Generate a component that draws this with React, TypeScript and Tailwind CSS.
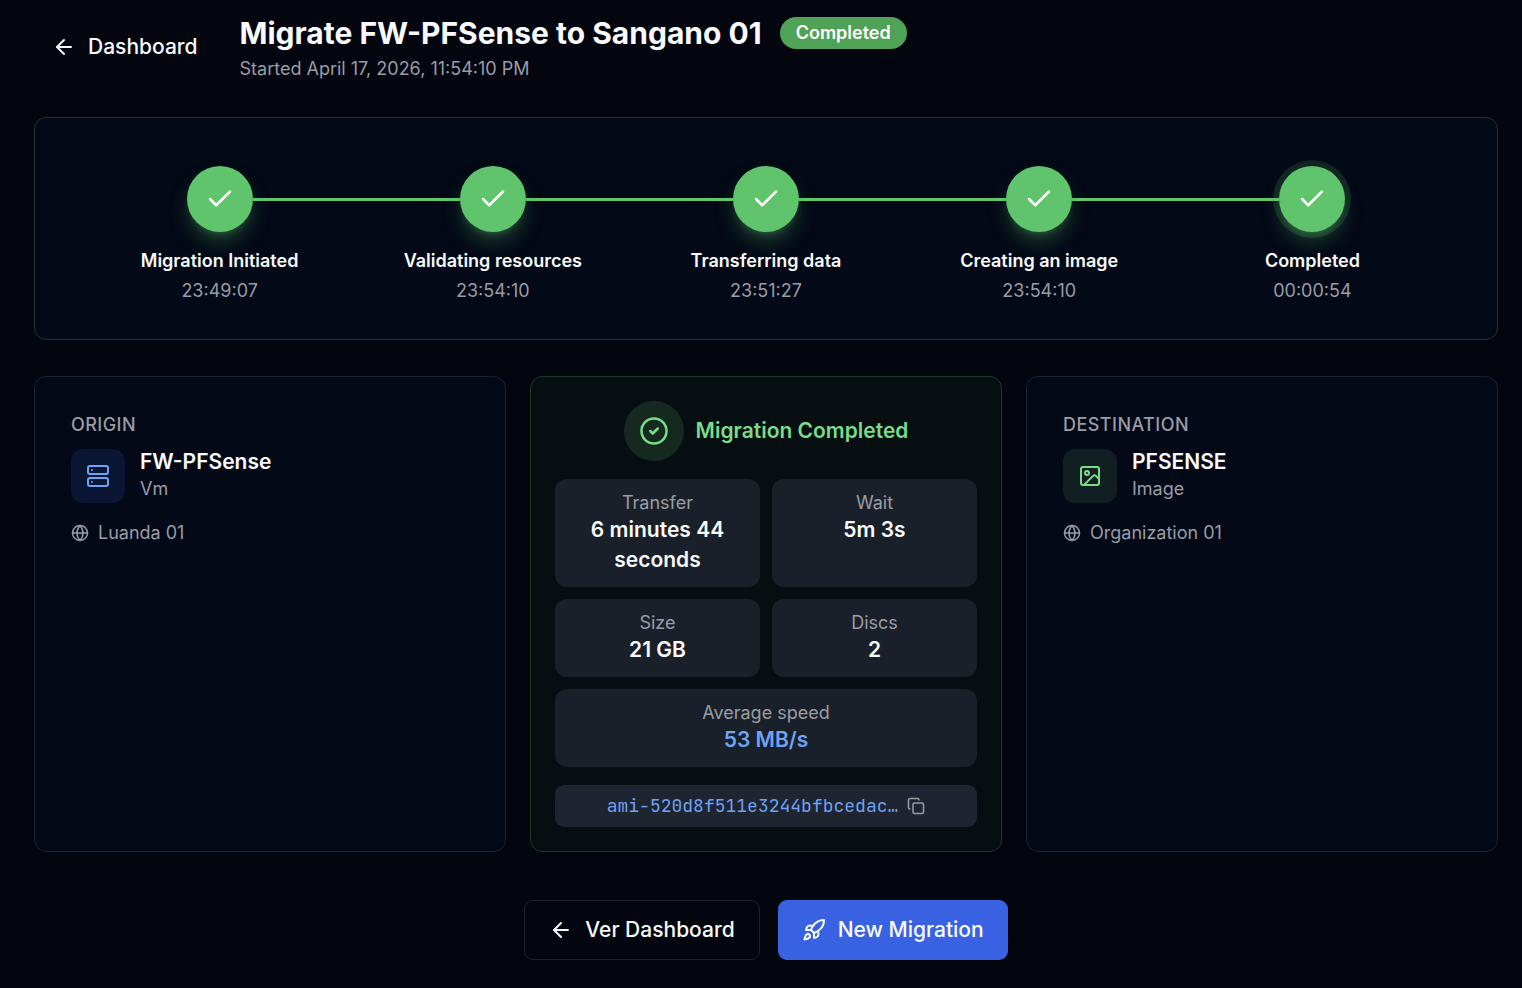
import { useState } from "react";
import type { ReactNode } from "react";
import {
  ArrowLeft,
  Check,
  CircleCheck,
  Copy,
  Globe,
  Image as ImageIcon,
  Rocket,
  Server,
} from "lucide-react";

const steps = [
  { label: "Migration Initiated", time: "23:49:07" },
  { label: "Validating resources", time: "23:54:10" },
  { label: "Transferring data", time: "23:51:27" },
  { label: "Creating an image", time: "23:54:10" },
  { label: "Completed", time: "00:00:54" },
];

const imageId = "ami-520d8f511e3244bfbcedac…";

function Timeline() {
  return (
    <section className="rounded-xl border border-[#1b3829] bg-[#030916] px-12 pt-12 pb-[35px]">
      <ol className="flex">
        {steps.map((step, i) => {
          const first = i === 0;
          const last = i === steps.length - 1;
          return (
            <li key={step.label} className="flex flex-1 flex-col items-center">
              <div className="flex w-full items-center">
                <span className={`relative h-[3px] flex-1 ${first ? "" : "bg-[#60c46c]"}`} />
                <span
                  className={`flex size-[66px] items-center justify-center rounded-full bg-[#60c46c] text-white ${
                    last
                      ? "shadow-[0_0_0_6px_rgba(96,196,108,0.15),0_12px_22px_-3px_rgba(96,196,108,0.3),0_5px_9px_-4px_rgba(96,196,108,0.3)]"
                      : "shadow-[0_12px_22px_-3px_rgba(96,196,108,0.3),0_5px_9px_-4px_rgba(96,196,108,0.3)]"
                  }`}
                >
                  <Check size={30} />
                </span>
                <span className={`relative h-[3px] flex-1 ${last ? "" : "bg-[#60c46c]"}`} />
              </div>
              <p className="mt-[15px] text-lg/[27px] font-semibold text-[#f8fafc]">{step.label}</p>
              <p className="mt-[3px] text-lg/[27px] text-[#9a9ca6]">{step.time}</p>
            </li>
          );
        })}
      </ol>
    </section>
  );
}

interface EndpointProps {
  title: string;
  name: string;
  kind: string;
  place: string;
  icon: ReactNode;
}

function Endpoint({ title, name, kind, place, icon }: EndpointProps) {
  return (
    <section className="rounded-xl border border-[#1c222e] bg-[#030916] p-9 text-lg/[27px] text-[#9a9ca6]">
      <h2 className="mb-3 text-lg/6 font-medium tracking-wide uppercase">{title}</h2>
      <div className="flex items-center gap-[15px]">
        {icon}
        <div>
          <p className="text-[21px]/[26px] font-semibold text-[#f8fafc]">{name}</p>
          <p className="leading-7">{kind}</p>
        </div>
      </div>
      <p className="mt-4 flex items-center gap-[9px]">
        <Globe size={18} />
        {place}
      </p>
    </section>
  );
}

interface StatProps {
  label: string;
  value: string;
  wide?: boolean;
}

function Stat({ label, value, wide }: StatProps) {
  return (
    <div className={`rounded-xl bg-[#1a2029] p-3 text-center ${wide ? "col-span-2" : ""}`}>
      <dt className="text-lg/6 text-[#9a9ca6]">{label}</dt>
      <dd className={`text-[21px]/[30px] font-semibold ${wide ? "text-[#6fa3f5]" : "text-[#f8fafc]"}`}>
        {value}
      </dd>
    </div>
  );
}

export default function App() {
  const [copied, setCopied] = useState(false);

  const handleCopy = () => {
    navigator.clipboard?.writeText(imageId);
    setCopied(true);
  };

  return (
    <main className="min-h-screen bg-[#03050f] pt-[15px] pr-6 pb-7 pl-[34px] font-['Inter',sans-serif] text-[#f8fafc]">
      {/* Header */}
      <header className="mb-[35px] flex items-start gap-6">
        <a href="#dashboard" className="flex items-center gap-3 px-[18px] py-[17px] text-[21px]/[30px] font-medium">
          <ArrowLeft size={24} />
          Dashboard
        </a>
        <div>
          <div className="flex items-center gap-[18px]">
            <h1 className="text-3xl/9 font-bold">Migrate FW-PFSense to Sangano 01</h1>
            <span className="rounded-full bg-[#4fa256] px-4 py-1 text-lg/6 font-semibold text-white">
              Completed
            </span>
          </div>
          <p className="mt-1 text-lg/[27px] text-[#9a9ca6]">Started April 17, 2026, 11:54:10 PM</p>
        </div>
      </header>

      <Timeline />

      {/* Origin / result / destination */}
      <div className="mt-9 grid grid-cols-3 gap-6">
        <Endpoint
          title="Origin"
          name="FW-PFSense"
          kind="Vm"
          place="Luanda 01"
          icon={
            <span className="flex size-[54px] items-center justify-center rounded-xl bg-[#0b1635] text-[#6fa3f5]">
              <Server size={24} />
            </span>
          }
        />

        <section className="rounded-xl border border-[#1b3a25] bg-[#070e11] p-6">
          <div className="flex items-center justify-center gap-3">
            <span className="flex size-[60px] items-center justify-center rounded-full bg-[#162920] text-[#78dc88]">
              <CircleCheck size={30} />
            </span>
            <h2 className="text-[21px]/[30px] font-semibold text-[#78dc88]">Migration Completed</h2>
          </div>
          <dl className="mt-[18px] grid grid-cols-2 gap-3">
            <Stat label="Transfer" value="6 minutes 44 seconds" />
            <Stat label="Wait" value="5m 3s" />
            <Stat label="Size" value="21 GB" />
            <Stat label="Discs" value="2" />
            <Stat label="Average speed" value="53 MB/s" wide />
          </dl>
          <div className="mt-[18px] flex items-center justify-center gap-[9px] rounded-[9px] bg-[#1e2430] px-3 py-[9px]">
            <code className="truncate font-['JetBrains_Mono','DejaVu_Sans_Mono',monospace] text-lg/6 text-[#6fa3f5]">
              {imageId}
            </code>
            <button
              type="button"
              onClick={handleCopy}
              aria-label={copied ? "Copied" : "Copy image id"}
              className="text-[#9a9ca6]"
            >
              <Copy size={18} />
            </button>
          </div>
        </section>

        <Endpoint
          title="Destination"
          name="PFSENSE"
          kind="Image"
          place="Organization 01"
          icon={
            <span className="flex size-[54px] items-center justify-center rounded-xl bg-[#111e22] text-[#78dc88]">
              <ImageIcon size={24} />
            </span>
          }
        />
      </div>

      {/* Actions */}
      <div className="mt-12 flex justify-center gap-[18px] text-[21px]/[30px] font-medium">
        <button type="button" className="flex h-[60px] items-center gap-3 rounded-[9px] border border-[#1c222e] px-6">
          <ArrowLeft size={24} />
          Ver Dashboard
        </button>
        <button type="button" className="flex h-[60px] items-center gap-3 rounded-[9px] bg-[#3962e3] px-6">
          <Rocket size={24} />
          New Migration
        </button>
      </div>
    </main>
  );
}
